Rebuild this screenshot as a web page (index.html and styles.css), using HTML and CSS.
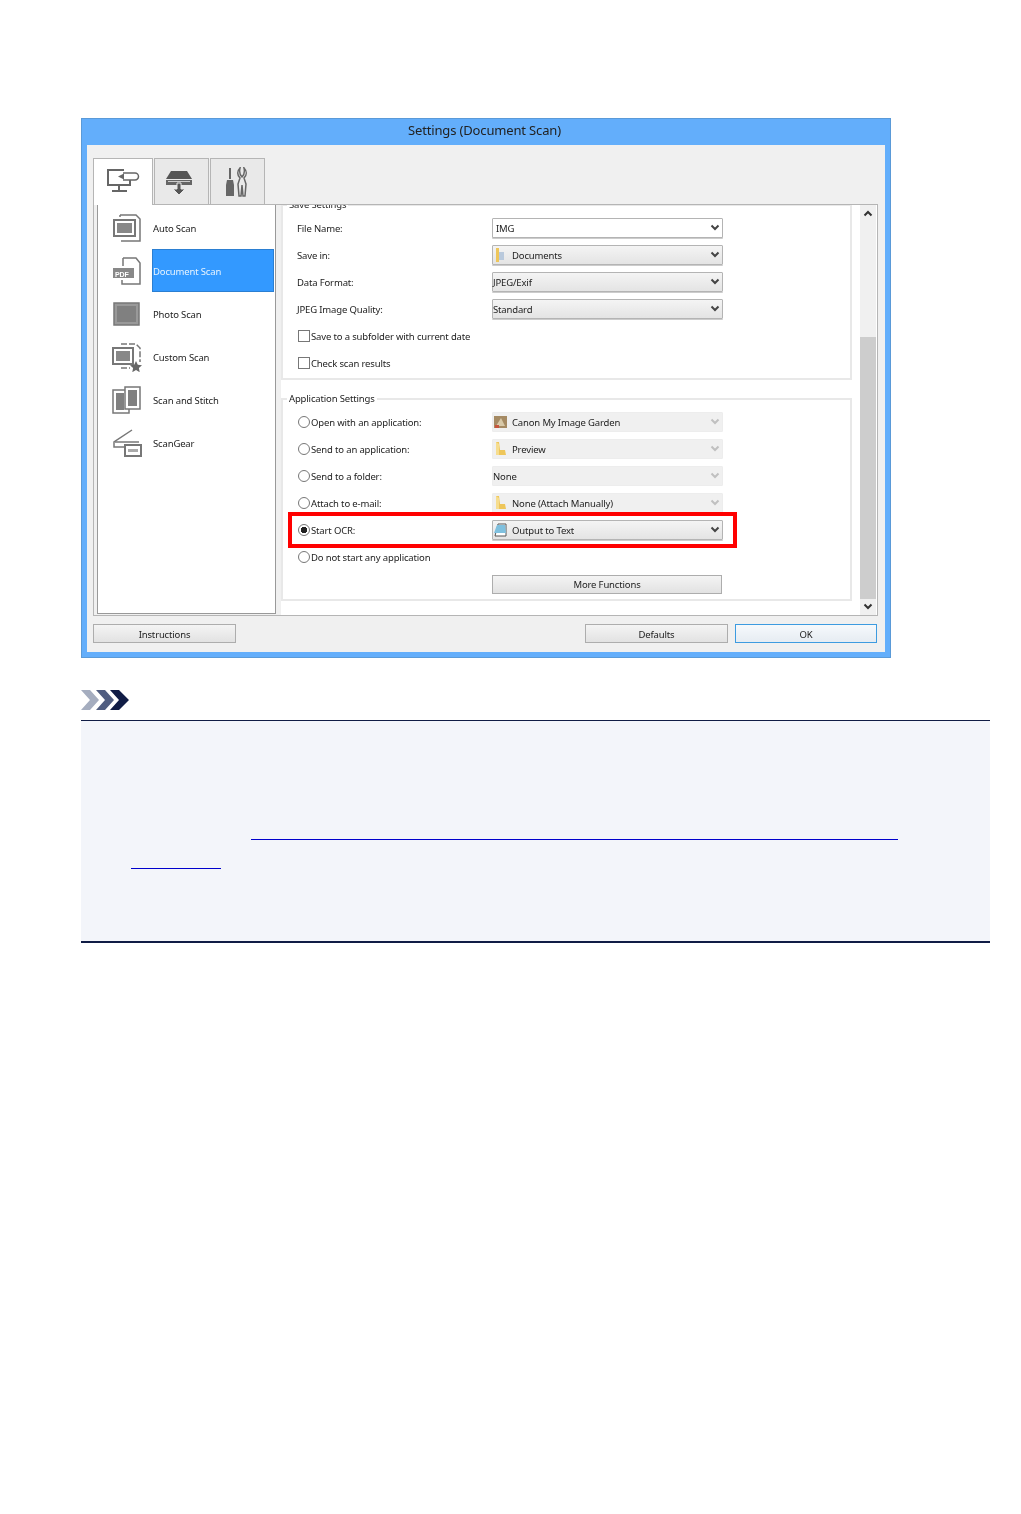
FILE: index.html
```html
<!DOCTYPE html>
<html lang="en">

<head>
    <meta charset="UTF-8">
    <title>Settings (Document Scan)</title>
    <link rel="stylesheet" href="styles.css">
</head>

<body>
    <svg class="defs" width="0" height="0">
        <symbol id="chev" viewBox="0 0 10 8">
            <path d="M1.5 1.5 5 5l3.5-3.5" fill="none" stroke="currentColor" stroke-width="2" />
        </symbol>
        <symbol id="folder" viewBox="0 0 14 16">
            <path d="M3 1h3l1 8h5l1 5H3z" fill="#eec65a" />
            <path d="M3 1v13h3V3z" fill="#f6dd8e" />
        </symbol>
        <symbol id="folderDoc" viewBox="0 0 14 16">
            <path d="M3 1h3v14H3z" fill="#eec65a" />
            <path d="M6 5h5v8H6z" fill="#b9c9dc" />
        </symbol>
    </svg>

    <div class="window">
        <div class="titleBar">Settings (Document Scan)</div>
        <div class="inner">
            <div class="tabs">
                <div class="tab tabActive">
                    <svg width="34" height="28" viewBox="0 0 34 28" fill="none" stroke="#666">
                        <path d="M18 2H2v15h22v-5" stroke-width="2" />
                        <path d="M13 17v5M6 23h15" stroke-width="2" />
                        <path d="M17 5h12a3.500 3.500 0 0 1 0 7H17" stroke-width="1.500" />
                        <path d="M18 5.500 12 8.500l6 3z" fill="#666" stroke="none" />
                    </svg>
                </div>
                <div class="tab">
                    <svg class="scannerIcon" width="28" height="26" viewBox="0 0 28 26">
                        <path d="M6 1h16l5 8H1z" fill="#555" />
                        <path d="M1 10h26v5H1z" fill="#666" />
                        <path d="M3 11h22v1H3z" fill="#ccc" />
                        <path d="M12 13h4v6h4l-6 6-6-6h4z" fill="#555" stroke="#e8e8e8" />
                    </svg>
                </div>
                <div class="tab">
                    <svg width="26" height="30" viewBox="0 0 26 30" fill="#666">
                        <path d="M4 1h2v11H4zM2 13h6l1 5v11H1V18z" />
                        <path d="M15 1c-3 3-3 7 0 10l-2 6 1 12h2l1-11 1 11h2l1-12-2-6c3-3 3-7 0-10 1 4 0 7-2 9-2-2-3-5-2-9z" fill="none" stroke="#666" stroke-width="1.500" />
                    </svg>
                </div>
            </div>

            <div class="tabBody">
                <ul class="scanList">
                    <li class="scanItem">
                        <svg class="scanIcon" width="32" height="30" viewBox="0 0 32 30" fill="none" stroke="#777">
                            <path d="M9 2h16l4 4v22H10M9 2v2" stroke-width="1.500" />
                            <rect x="3" y="7" width="21" height="16" fill="#fff" stroke-width="2" />
                            <rect x="6" y="10" width="15" height="10" fill="#888" stroke="none" />
                        </svg>
                        <span>Auto Scan</span>
                    </li>
                    <li class="scanItem">
                        <svg class="scanIcon" width="32" height="30" viewBox="0 0 32 30" fill="none" stroke="#777">
                            <path d="M12 2h13l4 5v21H11v-4M12 2v8" stroke-width="1.500" />
                            <rect x="2" y="12" width="21" height="10" fill="#888" stroke="none" />
                            <text class="pdfMark" x="4" y="20.500">PDF</text>
                        </svg>
                        <span class="itemSelected">Document Scan</span>
                    </li>
                    <li class="scanItem">
                        <svg class="scanIcon" width="32" height="30" viewBox="0 0 32 30">
                            <rect x="3" y="4" width="25" height="22" fill="#999" stroke="#777" stroke-width="1.500" />
                            <rect x="6" y="7" width="19" height="16" fill="#808080" />
                        </svg>
                        <span>Photo Scan</span>
                    </li>
                    <li class="scanItem">
                        <svg class="scanIcon" width="32" height="30" viewBox="0 0 32 30" fill="none" stroke="#777">
                            <path d="M10 2h15l4 4v14M10 26h9" stroke-width="1.500" stroke-dasharray="6 2" />
                            <rect x="2" y="6" width="20" height="16" fill="#fff" stroke-width="2" />
                            <rect x="5" y="9" width="14" height="10" fill="#888" stroke="none" />
                            <path d="m25 19 1.800 3.800 4.200.5-3.100 2.800.8 4.100-3.700-2.100-3.700 2.100.8-4.100-3.100-2.800 4.200-.5z" fill="#666" stroke="none" />
                        </svg>
                        <span>Custom Scan</span>
                    </li>
                    <li class="scanItem">
                        <svg class="scanIcon" width="32" height="30" viewBox="0 0 32 30">
                            <rect x="2" y="5" width="16" height="23" fill="#fff" stroke="#777" stroke-width="1.500" />
                            <rect x="14" y="2" width="15" height="22" fill="#fff" stroke="#777" stroke-width="1.500" />
                            <rect x="5" y="8" width="8" height="17" fill="#808080" />
                            <rect x="17" y="5" width="9" height="16" fill="#808080" />
                        </svg>
                        <span>Scan and Stitch</span>
                    </li>
                    <li class="scanItem">
                        <svg class="scanIcon" width="32" height="30" viewBox="0 0 32 30" fill="none" stroke="#777" stroke-width="1.500">
                            <path d="M21 2 3 14v5h12" />
                            <path d="M4 14h24" />
                            <rect x="14" y="17" width="16" height="11" fill="#fff" stroke-width="2" />
                            <path d="M17 21h10v3H17z" fill="#aaa" stroke="none" />
                        </svg>
                        <span>ScanGear</span>
                    </li>
                </ul>

                <div class="settingsPane">
                    <div class="settingsScroll">
                        <fieldset class="group">
                            <legend>Save Settings</legend>
                            <div class="formRow">
                                <label class="rowLabel">File Name:</label>
                                <div class="combo comboInput"><span class="comboText">IMG</span><svg class="comboArrow"><use href="#chev" /></svg></div>
                            </div>
                            <div class="formRow">
                                <label class="rowLabel">Save in:</label>
                                <div class="combo"><svg class="comboIcon"><use href="#folderDoc" /></svg><span>Documents</span><svg class="comboArrow"><use href="#chev" /></svg></div>
                            </div>
                            <div class="formRow">
                                <label class="rowLabel">Data Format:</label>
                                <div class="combo"><span>JPEG/Exif</span><svg class="comboArrow"><use href="#chev" /></svg></div>
                            </div>
                            <div class="formRow">
                                <label class="rowLabel">JPEG Image Quality:</label>
                                <div class="combo"><span>Standard</span><svg class="comboArrow"><use href="#chev" /></svg></div>
                            </div>
                            <div class="formRow">
                                <label class="option"><i class="check"></i>Save to a subfolder with current date</label>
                            </div>
                            <div class="formRow rowLast">
                                <label class="option"><i class="check"></i>Check scan results</label>
                            </div>
                        </fieldset>

                        <fieldset class="group groupApp">
                            <legend>Application Settings</legend>
                            <div class="formRow">
                                <label class="option"><i class="radio"></i>Open with an application:</label>
                                <div class="combo comboOff">
                                    <svg class="comboIcon" viewBox="0 0 14 16">
                                        <rect x="1" y="2" width="13" height="12" fill="#a58a63" />
                                        <path d="M3 12 8 4l4 8z" fill="#d8c9a8" />
                                        <path d="M2 11h4v3H2z" fill="#c8553d" />
                                    </svg>
                                    <span>Canon My Image Garden</span><svg class="comboArrow"><use href="#chev" /></svg>
                                </div>
                            </div>
                            <div class="formRow">
                                <label class="option"><i class="radio"></i>Send to an application:</label>
                                <div class="combo comboOff"><svg class="comboIcon"><use href="#folder" /></svg><span>Preview</span><svg class="comboArrow"><use href="#chev" /></svg></div>
                            </div>
                            <div class="formRow">
                                <label class="option"><i class="radio"></i>Send to a folder:</label>
                                <div class="combo comboOff"><span>None</span><svg class="comboArrow"><use href="#chev" /></svg></div>
                            </div>
                            <div class="formRow">
                                <label class="option"><i class="radio"></i>Attach to e-mail:</label>
                                <div class="combo comboOff"><svg class="comboIcon"><use href="#folder" /></svg><span>None (Attach Manually)</span><svg class="comboArrow"><use href="#chev" /></svg></div>
                            </div>
                            <div class="formRow">
                                <label class="option"><i class="radio radioOn"></i>Start OCR:</label>
                                <div class="combo">
                                    <svg class="comboIcon" viewBox="0 0 14 16">
                                        <path d="M5 2h8v12H2z" fill="#fff" stroke="#555" />
                                        <path d="M4 3h8l1 8H1z" fill="#7fc0de" />
                                    </svg>
                                    <span>Output to Text</span><svg class="comboArrow"><use href="#chev" /></svg>
                                </div>
                            </div>
                            <div class="formRow">
                                <label class="option"><i class="radio"></i>Do not start any application</label>
                            </div>
                            <div class="formRow rowLast">
                                <span></span>
                                <button class="btn btnMore">More Functions</button>
                            </div>
                            <div class="redBox"></div>
                        </fieldset>
                    </div>

                    <div class="scrollbar">
                        <svg class="scrollArrow"><use href="#chev" transform="matrix(1 0 0 -1 0 8)" /></svg>
                        <div class="scrollTrack"><div class="scrollThumb"></div></div>
                        <svg class="scrollArrow"><use href="#chev" /></svg>
                    </div>
                </div>
            </div>

            <div class="buttonRow">
                <button class="btn">Instructions</button>
                <span class="buttonGap"></span>
                <button class="btn">Defaults</button>
                <button class="btn btnDefault">OK</button>
            </div>
        </div>
    </div>

    <div class="noteHead">
        <svg width="48" height="20" viewBox="0 0 48 20">
            <path d="M0 0h9l9 10-9 10H0l9-10z" fill="#a5adbf" />
            <path d="M15 0h9l9 10-9 10h-9l9-10z" fill="#505d80" />
            <path d="M29 0h9l10 10-10 10h-9l9-10z" fill="#101c45" />
        </svg>
    </div>
    <div class="noteBody">
        <a class="noteLink linkLong" href="#"></a>
        <a class="noteLink linkShort" href="#"></a>
    </div>
</body>

</html>
```

FILE: styles.css
```css
body {
    margin: 0;
    padding: 118px 31px 0 81px;
    background: #fff;
    font-family: "Noto Sans", sans-serif;
    font-size: 9.5px;
    letter-spacing: -0.15px;
    color: #222;
}

.defs {
    position: absolute;
}

/* dialog window */

.window {
    width: 810px;
    height: 540px;
    box-sizing: border-box;
    padding: 0 6px 6px;
    background: #63aefb;
    box-shadow: inset 0 0 0 1px #5a9ad8;
    filter: blur(0.55px);
}

.titleBar {
    height: 27px;
    padding-right: 3px;
    line-height: 25px;
    text-align: center;
    font-size: 13px;
}

.inner {
    height: 507px;
    box-sizing: border-box;
    padding: 13px 7px 0 6px;
    background: #f0f0f0;
}

.tabs {
    display: flex;
    gap: 1px;
    height: 46px;
}

.tab {
    position: relative;
    width: 55px;
    height: 46px;
    box-sizing: border-box;
    display: flex;
    align-items: center;
    justify-content: center;
    background: #e9e9e9;
    border: 1px solid #b5b5b5;
    border-bottom: none;
}

.tabActive {
    z-index: 1;
    width: 60px;
    height: 47px;
    background: #fff;
}

.scannerIcon {
    margin: 2px 5px 0 0;
}

.tabBody {
    display: flex;
    gap: 5px;
    height: 412px;
    box-sizing: border-box;
    padding-left: 3px;
    border: 1px solid #b5b5b5;
    background: #f0f0f0;
}

/* scan type list */

.scanList {
    width: 179px;
    height: 409px;
    box-sizing: border-box;
    margin: 0;
    padding: 1px 0 0;
    list-style: none;
    background: #fff;
    border: 1px solid #999;
    border-top: none;
}

.scanItem {
    display: flex;
    align-items: center;
    height: 43px;
}

.scanIcon {
    flex: none;
    margin: 0 9px 0 13px;
}

.scanItem span {
    flex: 1;
    align-self: stretch;
    margin-right: 1px;
    padding: 1px 0 0 1px;
    display: flex;
    align-items: center;
}

.scanItem .itemSelected {
    background: #3399ff;
    color: #e8f4ff;
    box-shadow: inset 0 0 0 1px #2b7fd2;
}

.pdfMark {
    fill: #fff;
    stroke: none;
    font: bold 7px "Liberation Sans", sans-serif;
}

/* right hand pane */

.settingsPane {
    flex: 1;
    display: flex;
    height: 410px;
    background: #fff;
    overflow: hidden;
}

.settingsScroll {
    width: 579px;
    margin-top: -7px;
}

.group {
    position: relative;
    width: 571px;
    box-sizing: border-box;
    margin: 0;
    padding: 6px 0 5px 14px;
    border: 2px solid #e8e8e8;
}

.groupApp {
    margin-top: 12px;
}

.group legend {
    margin-left: -10px;
    padding: 0 2px;
    line-height: 14px;
}

.formRow {
    display: grid;
    grid-template-columns: 195px 231px;
    align-items: center;
    height: 20px;
    margin-bottom: 7px;
}

.rowLast {
    margin-bottom: 0;
}

.option {
    display: flex;
    align-items: center;
    white-space: nowrap;
}

.formRow .option:only-child {
    grid-column: span 2;
}

.check,
.radio {
    flex: none;
    width: 12px;
    height: 12px;
    box-sizing: border-box;
    margin: 0 1px 0 1px;
    background: #fff;
    border: 1px solid #777;
}

.radio {
    border-radius: 50%;
}

.radioOn {
    background: radial-gradient(circle, #222 0 3px, #fff 3.500px);
}

/* combo boxes */

.combo {
    display: flex;
    align-items: center;
    height: 20px;
    box-sizing: border-box;
    padding: 0 2px 0 0;
    background: linear-gradient(#f4f4f4, #e4e4e4);
    border: 1px solid #b4b4b4;
    border-radius: 1px;
    box-shadow: 0 1px 0 #ccc;
}

.combo span {
    flex: 1;
}

.comboInput {
    background: #fff;
}

.comboText {
    padding-left: 3px;
}

.comboIcon {
    flex: none;
    width: 14px;
    height: 16px;
    margin-right: 5px;
}

.comboArrow {
    flex: none;
    width: 10px;
    height: 8px;
    color: #444;
}

.comboOff {
    background: #f0f0f0;
    border-color: #ededed;
    box-shadow: none;
}

.comboOff .comboArrow {
    color: #c0c0c0;
}

.redBox {
    position: absolute;
    left: 5px;
    top: 106px;
    width: 449px;
    height: 36px;
    box-sizing: border-box;
    border: 4px solid #f00;
}

/* buttons */

.btn {
    width: 143px;
    height: 19px;
    padding: 1px 0 0;
    font: 9.5px "Noto Sans", sans-serif;
    letter-spacing: -0.15px;
    color: #222;
    background: linear-gradient(#f4f4f4, #e2e2e2);
    border: 1px solid #adadad;
}

.btnMore {
    width: 230px;
}

.btnDefault {
    width: 142px;
    margin-left: 7px;
    background: linear-gradient(#f6f9fc, #e6ecf2);
    border-color: #3d9be0;
}

.buttonRow {
    display: flex;
    margin-top: 8px;
    padding-right: 1px;
}

.buttonGap {
    flex: 1;
}

/* scroll bar */

.scrollbar {
    display: flex;
    flex-direction: column;
    align-items: center;
    width: 16px;
    background: #f0f0f0;
}

.scrollArrow {
    flex: none;
    width: 10px;
    height: 8px;
    margin: 4px 0;
    color: #333;
}

.scrollTrack {
    flex: 1;
    width: 100%;
    display: flex;
    flex-direction: column;
    justify-content: flex-end;
}

.scrollThumb {
    height: 262px;
    background: #cdcdcd;
}

/* note */

.noteHead {
    display: flex;
    margin-top: 32px;
    height: 30px;
    border-bottom: 1px solid #101c45;
}

.noteBody {
    height: 222px;
    box-sizing: border-box;
    padding-top: 118px;
    background: #f3f5fa;
    border-bottom: 2px solid #101c45;
}

.noteLink {
    display: block;
    height: 1px;
    background: #0000cc;
}

.linkLong {
    width: 647px;
    margin-left: 170px;
}

.linkShort {
    width: 90px;
    margin: 28px 0 0 50px;
}
```
